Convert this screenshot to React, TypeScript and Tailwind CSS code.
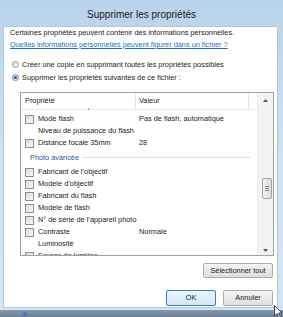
import React from "react";

function Checkbox() {
  return (
    <div className="w-[9px] h-[9px] shrink-0 border border-[#8f8f8f] bg-gradient-to-br from-[#dcdcdc] to-[#f8f8f8]" />
  );
}

type Row =
  | { kind: "item"; label: string; value?: string; box?: boolean }
  | { kind: "group"; label: string };

const rows: Row[] = [
  { kind: "item", label: "Mode flash", value: "Pas de flash, automatique", box: true },
  { kind: "item", label: "Niveau de puissance du flash", box: false },
  { kind: "item", label: "Distance focale 35mm", value: "28", box: true },
  { kind: "group", label: "Photo avancée" },
  { kind: "item", label: "Fabricant de l’objectif", box: true },
  { kind: "item", label: "Modèle d’objectif", box: true },
  { kind: "item", label: "Fabricant du flash", box: true },
  { kind: "item", label: "Modèle de flash", box: true },
  { kind: "item", label: "N° de série de l’appareil photo", box: true },
  { kind: "item", label: "Contraste", value: "Normale", box: true },
  { kind: "item", label: "Luminosité", box: false },
  { kind: "item", label: "Source de lumière", box: true },
];

export default function App() {
  return (
    <div className="relative w-[283px] h-[317px] overflow-hidden flex flex-col bg-gradient-to-b from-[#b9d3ea] via-[#cfe2f4] to-[#d3e5f5] font-['Liberation_Sans',Arial,sans-serif] text-[#1b1b1b]">
      {/* title bar */}
      <div className="h-[26px] shrink-0 flex items-center justify-center pt-[2px] text-[10px] text-[#1a1a1a]">
        Supprimer les propriétés
      </div>

      {/* panel */}
      <div className="ml-[3px] w-[275px] h-[282px] shrink-0 bg-white border border-[#b4c7da] flex flex-col text-[7.35px] leading-[12px]">
        <div className="pl-[6px] mt-[0px] h-[12px]">
          Certaines propriétés peuvent contenir des informations personnelles.
        </div>
        <div className="pl-[6px] h-[12px] text-[#1a6fc4] underline">
          Quelles informations personnelles peuvent figurer dans un fichier ?
        </div>

        <div className="pl-[8px] mt-[7px] h-[13px] flex items-center gap-[3px]">
          <div className="w-[7px] h-[7px] rounded-full border border-[#9a9a9a] bg-gradient-to-br from-[#d8d8d8] to-[#fafafa]" />
          <span className="leading-[13px]">Créer une copie en supprimant toutes les propriétés possibles</span>
        </div>
        <div className="pl-[8px] h-[13px] flex items-center gap-[3px]">
          <div className="w-[7px] h-[7px] rounded-full border border-[#6f8aa6] bg-[#e6eef6] flex items-center justify-center">
            <div className="w-[3px] h-[3px] rounded-full bg-[#1f4f8a]" />
          </div>
          <span className="leading-[13px]">Supprimer les propriétés suivantes de ce fichier :</span>
        </div>

        {/* list box */}
        <div className="ml-[16px] mt-[8px] w-[254px] h-[164px] shrink-0 border border-[#9ea3aa] flex">
          <div className="w-[236px] h-full overflow-hidden flex flex-col relative">
            <div className="h-[17px] shrink-0 flex border-b border-[#e8e8e8] items-center">
              <div className="w-[115px] h-full pl-[4px] flex items-center border-r border-[#e3e3e3]">Propriété</div>
              <div className="w-[113px] h-full pl-[3px] flex items-center border-r border-[#e3e3e3]">Valeur</div>
              <div className="flex-1" />
            </div>
            <div className="absolute left-[67px] top-[15px] w-[1px] h-[2px] bg-[#9a9a9a]" />
            <div className="mt-[3px] flex flex-col">
              {rows.map((r, i) =>
                r.kind === "group" ? (
                  <div key={i} className="h-[17px] shrink-0 flex items-center pl-[9px] pr-[7px]">
                    <span className="text-[#2f5597]">{r.label}</span>
                    <div className="flex-1 ml-[3px] h-[1px] bg-[#d5dfec]" />
                  </div>
                ) : (
                  <div key={i} className="h-[12px] shrink-0 flex items-center">
                    <div className="w-[115px] pl-[4px] flex items-center gap-[4px] whitespace-nowrap">
                      {r.box ? <Checkbox /> : <div className="w-[9px] shrink-0" />}
                      <span>{r.label}</span>
                    </div>
                    <div className="pl-[3px] whitespace-nowrap">{r.value ?? ""}</div>
                  </div>
                )
              )}
            </div>
          </div>
          {/* scrollbar */}
          <div className="flex-1 h-full bg-[#f3f3f3] border-l border-[#ececec] flex flex-col items-center">
            <div className="h-[14px] flex items-center justify-center">
              <svg width="5" height="3" viewBox="0 0 5 3">
                <path d="M0 3 L2.5 0 L5 3 Z" fill="#555" />
              </svg>
            </div>
            <div className="mt-[71px] ml-[2px] w-[10px] h-[21px] rounded-[2px] border border-[#a4a4a4] bg-gradient-to-r from-[#f2f2f2] to-[#dcdcdc] flex flex-col items-center justify-center gap-[1px]">
              <div className="w-[4px] h-[1px] bg-[#8a8a8a]" />
              <div className="w-[4px] h-[1px] bg-[#8a8a8a]" />
              <div className="w-[4px] h-[1px] bg-[#8a8a8a]" />
            </div>
            <div className="flex-1" />
            <div className="h-[10px] flex items-center justify-center">
              <svg width="5" height="3" viewBox="0 0 5 3">
                <path d="M0 0 L5 0 L2.5 3 Z" fill="#555" />
              </svg>
            </div>
          </div>
        </div>

        {/* select all */}
        <div className="mt-[7px] flex justify-end pr-[4px]">
          <div className="w-[70px] h-[15px] rounded-[2px] border border-[#adadad] bg-gradient-to-b from-[#f4f4f4] to-[#dedede] flex items-center justify-center">
            Sélectionner tout
          </div>
        </div>

        {/* OK / Annuler */}
        <div className="mt-[12px] flex justify-end pr-[4px] gap-[7px]">
          <div className="w-[50px] h-[16px] rounded-[2px] border border-[#3c7fb1] bg-gradient-to-b from-[#eaf6fd] to-[#d2e8f7] flex items-center justify-center">
            OK
          </div>
          <div className="w-[50px] h-[16px] rounded-[2px] border border-[#adadad] bg-gradient-to-b from-[#f4f4f4] to-[#dedede] flex items-center justify-center">
            Annuler
          </div>
        </div>
      </div>

      <div className="h-[2px] shrink-0" />
      <div className="flex-1 bg-gradient-to-b from-[#8497ab] to-[#6e8297] relative">
        <div className="absolute left-[23px] top-[2px] w-[4px] h-[4px] rounded-full bg-[#3b78c4]" />
      </div>

      {/* mouse cursor */}
      <svg className="absolute left-[274px] top-[305px]" width="9" height="13" viewBox="0 0 9 13">
        <path d="M0.5 0.5 L0.5 11 L3 8.5 L5 12.5 L6.5 11.8 L4.6 8 L8 8 Z" fill="#fff" stroke="#222" strokeWidth="0.8" />
      </svg>
    </div>
  );
}
